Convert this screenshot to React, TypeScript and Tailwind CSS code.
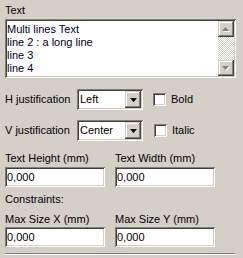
import React from "react";

const sunken =
  "shadow-[inset_1px_1px_0_#808080,inset_-1px_-1px_0_#ffffff,inset_2px_2px_0_#404040,inset_-2px_-2px_0_#d4d0c8]";
const raised =
  "shadow-[inset_-1px_-1px_0_#404040,inset_1px_1px_0_#d4d0c8,inset_-2px_-2px_0_#808080,inset_2px_2px_0_#ffffff]";

function DownArrow() {
  return (
    <svg width="7" height="4" viewBox="0 0 7 4">
      <path d="M0 0H7L3.5 4Z" fill="#000" />
    </svg>
  );
}

function GrayArrow({ up }: { up: boolean }) {
  return (
    <svg width="8" height="5" viewBox="0 0 8 5">
      {up ? (
        <>
          <path d="M1 5H8L4.5 1.5Z" fill="#ffffff" />
          <path d="M0 4H7L3.5 0Z" fill="#808080" />
        </>
      ) : (
        <>
          <path d="M1 1H8L4.5 5Z" fill="#ffffff" />
          <path d="M0 0H7L3.5 4Z" fill="#808080" />
        </>
      )}
    </svg>
  );
}

function Combo({ value }: { value: string }) {
  return (
    <div className={`w-[66px] h-[21px] bg-white p-[2px] flex ${sunken}`}>
      <div className="flex-1 pl-[1px] leading-[17px]">{value}</div>
      <div className={`w-[16px] h-[17px] bg-[#d4d0c8] flex items-center justify-center ${raised}`}>
        <DownArrow />
      </div>
    </div>
  );
}

function CheckBox({ label }: { label: string }) {
  return (
    <div className="flex items-center">
      <div className={`w-[13px] h-[13px] bg-white ${sunken}`} />
      <span className="ml-[5px] leading-[13px]">{label}</span>
    </div>
  );
}

function Input({ value }: { value: string }) {
  return (
    <div className={`w-[100px] h-[20px] bg-white pl-[2px] pt-[2px] ${sunken}`}>
      <div className="leading-[16px]">{value}</div>
    </div>
  );
}

export default function App() {
  return (
    <div
      className="w-[243px] h-[258px] bg-[#d4d0c8] pl-[5px] text-[11px] text-black flex flex-col overflow-hidden"
      style={{ fontFamily: '"Liberation Sans", Arial, sans-serif' }}
    >
      <div className="mt-[4px] h-[13px] leading-[13px]">Text</div>
      <div className={`mt-[2px] w-[231px] h-[59px] bg-white p-[2px] flex ${sunken}`}>
        <div className="flex-1 pt-[2px] leading-[13px] text-[#000020]">
          <div>Multi lines Text</div>
          <div>line 2 : a long line</div>
          <div>line 3</div>
          <div>line 4</div>
        </div>
        <div className="w-[16px] flex flex-col">
          <div className={`h-[16px] bg-[#d4d0c8] flex items-center justify-center ${raised}`}>
            <GrayArrow up={true} />
          </div>
          <div className="flex-1 bg-[image:repeating-conic-gradient(#ffffff_0%_25%,#d4d0c8_0%_50%)] bg-[length:2px_2px]" />
          <div className={`h-[16px] bg-[#d4d0c8] flex items-center justify-center ${raised}`}>
            <GrayArrow up={false} />
          </div>
        </div>
      </div>

      <div className="mt-[11px] h-[21px] flex items-center">
        <div className="w-[72px]">H justification</div>
        <Combo value="Left" />
        <div className="ml-[10px]">
          <CheckBox label="Bold" />
        </div>
      </div>
      <div className="mt-[10px] h-[21px] flex items-center">
        <div className="w-[72px]">V justification</div>
        <Combo value="Center" />
        <div className="ml-[11px]">
          <CheckBox label="Italic" />
        </div>
      </div>

      <div className="mt-[11px] h-[13px] leading-[13px] flex">
        <div className="w-[110px]">Text Height (mm)</div>
        <div>Text Width (mm)</div>
      </div>
      <div className="mt-[2px] flex gap-[10px]">
        <Input value="0,000" />
        <Input value="0,000" />
      </div>

      <div className="mt-[6px] h-[13px] leading-[13px]">Constraints:</div>

      <div className="mt-[7px] h-[13px] leading-[13px] flex">
        <div className="w-[110px]">Max Size X (mm)</div>
        <div>Max Size Y (mm)</div>
      </div>
      <div className="mt-[1px] flex gap-[10px]">
        <Input value="0,000" />
        <Input value="0,000" />
      </div>

      <div className="mt-[6px] w-[230px] h-[2px] border-t border-t-[#808080] border-b border-b-white" />
    </div>
  );
}
